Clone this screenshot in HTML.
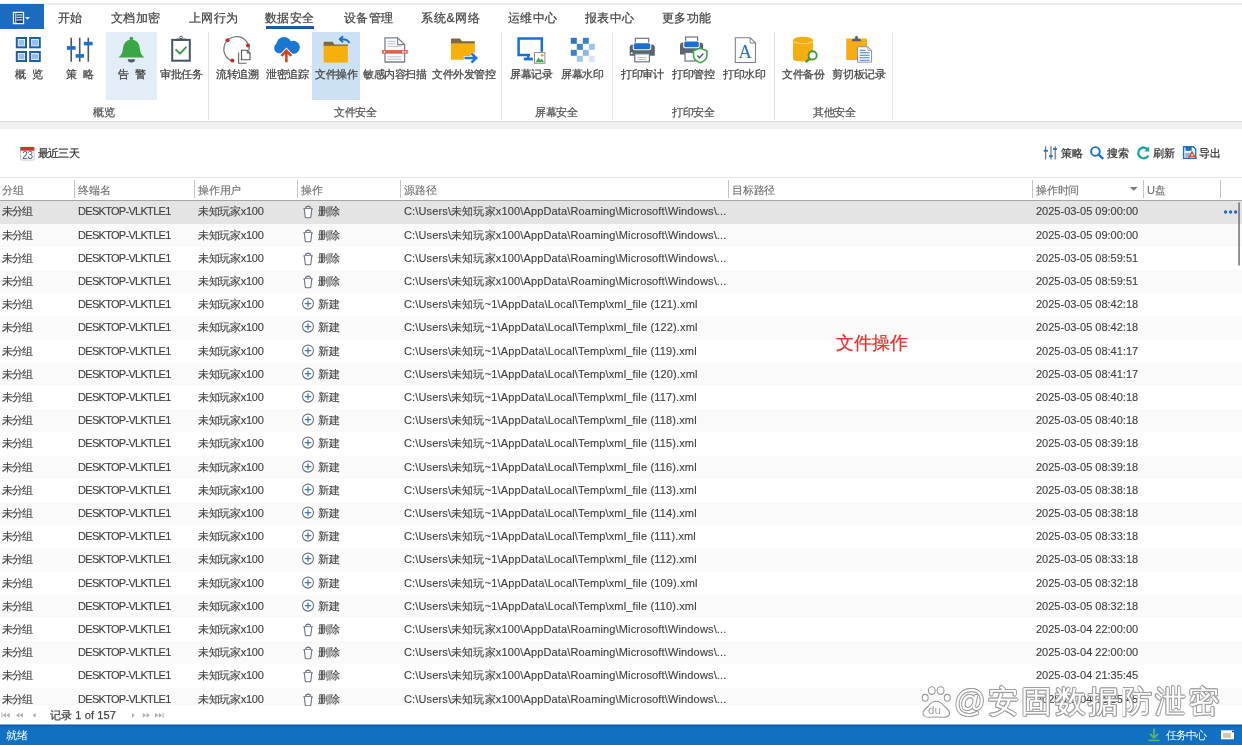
<!DOCTYPE html>
<html><head><meta charset="utf-8">
<style>
*{box-sizing:border-box;margin:0;padding:0}
html,body{width:1242px;height:745px;overflow:hidden;background:#fff;font-family:"Liberation Sans",sans-serif;color:#333}
body{will-change:transform}
.abs{position:absolute}
svg.ov{position:absolute;left:0;top:0;overflow:visible}
#topline{position:absolute;left:0;top:3px;width:1242px;height:2px;background:#ececec}
#appbtn{position:absolute;left:0;top:4px;width:44px;height:25px;background:#1c6bbf}
.tab{position:absolute;top:10px;font-size:12px;color:#444;white-space:nowrap;line-height:16px;letter-spacing:0.4px}
#ul{position:absolute;left:266px;top:26px;width:48px;height:3px;background:#1a5aa5}
.hl{position:absolute;top:32px;height:68px}
.lbl{position:absolute;top:67px;font-size:11px;color:#444;white-space:nowrap;line-height:14px;letter-spacing:-0.4px}
.glbl{position:absolute;top:105px;font-size:11px;color:#555;white-space:nowrap;line-height:14px;letter-spacing:-0.4px}
.sep{position:absolute;top:32px;width:1px;height:88px;background:#e2e2e2}
#band{position:absolute;left:0;top:121px;width:1242px;height:8px;background:#f0f0f0;border-top:1px solid #dadada}
.tb{position:absolute;top:146px;font-size:11px;color:#333;white-space:nowrap;line-height:14px}
#hdr{position:absolute;z-index:2;left:0;top:177px;width:1242px;height:24px;border-top:1px solid #e6e6e6;border-bottom:1px solid #a6a6a6;background:#fff}
.h{position:absolute;top:4.5px;font-size:11px;color:#6e6e6e;white-space:nowrap;line-height:14px;letter-spacing:-0.2px}
.hd{position:absolute;top:2px;width:1px;height:18px;background:#c4c4c4}
.row{position:absolute;left:0;width:1242px;height:23.2px;background:#fff}
.row.alt{background:#fafafa}
.row.sel{background:#e4e4e4}
.c{position:absolute;top:4px;font-size:11px;line-height:15px;color:#404040;white-space:nowrap}
.ic{position:absolute;left:0;top:0}
.dk{letter-spacing:-0.7px}
.grp{letter-spacing:-1px}
.src{letter-spacing:0.15px}
#pager{position:absolute;left:0;top:706px;width:1242px;height:18px;background:#fff}
#status{position:absolute;left:0;top:724px;width:1242px;height:21px;background:linear-gradient(#7fb0e0 0,#7fb0e0 1px,#0a58a8 1px,#0a58a8 2px,#1170c2 2px)}
.wm{position:absolute;line-height:36px;color:#fff;white-space:nowrap;text-shadow:0.9px 0 0 #a0a0a0,-0.9px 0 0 #a0a0a0,0 0.9px 0 #a0a0a0,0 -0.9px 0 #a0a0a0,0.6px 0.6px 0 #a0a0a0,-0.6px 0.6px 0 #a0a0a0,0.6px -0.6px 0 #a0a0a0,-0.6px -0.6px 0 #a0a0a0}
.tab,.lbl,.glbl,.tb,.tx{-webkit-text-stroke:0.25px currentColor}
.h{-webkit-text-stroke:0.1px currentColor}
.c{-webkit-text-stroke:0.12px currentColor}
</style></head><body>
<div id="topline"></div>
<div id="appbtn"></div>
<div class="tab" style="left:58px">开始</div>
<div class="tab" style="left:111px">文档加密</div>
<div class="tab" style="left:189px">上网行为</div>
<div class="tab" style="left:265px">数据安全</div>
<div class="tab" style="left:344px">设备管理</div>
<div class="tab" style="left:421px;letter-spacing:0.7px">系统&amp;网络</div>
<div class="tab" style="left:508px">运维中心</div>
<div class="tab" style="left:585px">报表中心</div>
<div class="tab" style="left:662px">更多功能</div>
<div id="ul"></div>
<div class="hl" style="left:106px;width:51px;background:#e3edf7"></div>
<div class="hl" style="left:312px;width:48px;background:#cce1f4"></div>
<div class="lbl" style="left:15px;letter-spacing:1.5px">概 览</div>
<div class="lbl" style="left:66px;letter-spacing:1.5px">策 略</div>
<div class="lbl" style="left:118px;letter-spacing:1.5px">告 警</div>
<div class="lbl" style="left:160px">审批任务</div>
<div class="lbl" style="left:216px">流转追溯</div>
<div class="lbl" style="left:266px">泄密追踪</div>
<div class="lbl" style="left:315px">文件操作</div>
<div class="lbl" style="left:363px;letter-spacing:-0.5px">敏感内容扫描</div>
<div class="lbl" style="left:432px;letter-spacing:-0.5px">文件外发管控</div>
<div class="lbl" style="left:510px">屏幕记录</div>
<div class="lbl" style="left:561px">屏幕水印</div>
<div class="lbl" style="left:621px">打印审计</div>
<div class="lbl" style="left:672px">打印管控</div>
<div class="lbl" style="left:723px">打印水印</div>
<div class="lbl" style="left:782px">文件备份</div>
<div class="lbl" style="left:832px;letter-spacing:-0.2px">剪切板记录</div>
<div class="sep" style="left:208px"></div>
<div class="sep" style="left:501px"></div>
<div class="sep" style="left:612px"></div>
<div class="sep" style="left:774px"></div>
<div class="sep" style="left:892px"></div>
<div class="glbl" style="left:93px">概览</div>
<div class="glbl" style="left:334px">文件安全</div>
<div class="glbl" style="left:535px">屏幕安全</div>
<div class="glbl" style="left:672px">打印安全</div>
<div class="glbl" style="left:813px">其他安全</div>
<svg class="ov" width="1242" height="130">
<!-- app button icon -->
<rect x="13.5" y="12.4" width="10" height="11.2" fill="#123f80" stroke="#f2f8ff" stroke-width="1.3"/>
<rect x="15.2" y="13.1" width="1.1" height="9.8" fill="#d6e6fa"/>
<g stroke="#c4d6ee" stroke-width="1.3"><path d="M16.6 14.8h5.9M16.6 17.3h5.9M16.6 19.8h5.9"/></g>
<path d="M24.8 17 H30 L27.4 19.8Z" fill="#d6ecff"/>
<!-- overview 4 squares -->
<g stroke="#1d5fa6" stroke-width="2" fill="#fff">
<rect x="16.8" y="38" width="9.2" height="9.3"/><rect x="30.2" y="38" width="9.6" height="9.3"/>
<rect x="16.8" y="52" width="9.2" height="9"/><rect x="30.2" y="52" width="9.6" height="9"/>
</g>
<g fill="#94bff0"><rect x="18.5" y="39.7" width="5.8" height="5.9"/><rect x="31.9" y="39.7" width="6.2" height="5.9"/><rect x="18.5" y="53.7" width="5.8" height="5.6"/><rect x="31.9" y="53.7" width="6.2" height="5.6"/></g>
<!-- strategy -->
<g stroke="#4b5563" stroke-width="1.6"><path d="M71.2 37.8V61.7M79.7 37.8V61.7M88.3 37.8V61.7"/></g>
<g fill="#1a72c9"><rect x="66.9" y="46.1" width="8.7" height="3.7"/><rect x="75.6" y="54.1" width="8.4" height="3.6"/><rect x="83.9" y="41.8" width="8.7" height="3.6"/></g>
<!-- bell -->
<circle cx="131.4" cy="38.6" r="1.9" fill="#3ba646"/>
<path d="M118.3 57.6 Q122.3 55 123 48.5 Q123.8 39.8 131.4 39.5 Q139 39.8 139.8 48.5 Q140.5 55 144.5 57.6 Z" fill="#3ba646"/>
<path d="M127.8 59.2 A3.6 3.2 0 0 0 135 59.2 Z" fill="#555a66"/>
<!-- clipboard -->
<rect x="172.2" y="39.9" width="17.6" height="20.8" fill="#fff" stroke="#4a5563" stroke-width="2"/>
<rect x="176.3" y="38.6" width="9.4" height="2.2" fill="#4a5563"/>
<circle cx="181" cy="37.4" r="1.3" fill="none" stroke="#4a5563" stroke-width="1"/>
<path d="M175.6 49.4 L180 53.7 L186.4 46.9" fill="none" stroke="#3a9a4a" stroke-width="1.9"/>
<!-- flow trace -->
<path d="M249 50.5 A12.6 12.6 0 1 0 234 61.5" fill="none" stroke="#7a7a7a" stroke-width="1.3"/>
<g fill="#c22a2e"><circle cx="227.5" cy="40.3" r="2"/><circle cx="248" cy="45.4" r="2"/><circle cx="232.4" cy="60.6" r="2"/></g>
<path d="M238.6 52.5 V63.2 H246.5" fill="none" stroke="#666" stroke-width="1.1"/>
<path d="M241.5 50.3 H247.2 L250 53.1 V59.8 H241.5 Z" fill="#fff" stroke="#555" stroke-width="1.1"/>
<path d="M247.2 50.3 V53.1 H250" fill="none" stroke="#555" stroke-width="0.9"/>
<!-- cloud -->
<g fill="#1977d3"><circle cx="284" cy="44.6" r="7.6"/><circle cx="293.3" cy="47.3" r="6.5"/><circle cx="279.3" cy="48" r="5.2"/><rect x="279.3" y="46" width="14" height="7.2"/></g>
<path d="M281.5 55.8 L286.4 50.6 L291.3 55.8 M286.4 51 V62.3" fill="none" stroke="#fff" stroke-width="4.4"/>
<path d="M281.5 55.8 L286.4 50.6 L291.3 55.8 M286.4 51 V62.3" fill="none" stroke="#d8401b" stroke-width="2.5"/>
<!-- folder return -->
<path d="M323.6 45.9 V42.4 Q323.6 41.7 324.3 41.7 H332.6 L334.4 44.6 H347.8 V45.9 Z" fill="#7b6a3e"/>
<rect x="323.6" y="45.8" width="24.2" height="16.8" fill="#f7b00b"/>
<path d="M349.4 43 Q347.5 38.8 340.5 39.3" fill="none" stroke="#1b6fc6" stroke-width="1.9"/>
<path d="M343 36.2 L339.8 39.3 L343 42.2" fill="none" stroke="#1b6fc6" stroke-width="1.9"/>
<!-- sensitive scan doc -->
<path d="M385 37.8 H397.6 L404.6 44.6 V62 H385 Z" fill="#fff" stroke="#7b818b" stroke-width="1.3"/>
<path d="M397.6 37.8 V44.6 H404.6" fill="none" stroke="#7b818b" stroke-width="1.1"/>
<g stroke="#b9bec6" stroke-width="1"><path d="M387.5 41.3h8M387.5 43.8h8M387.5 46.3h14M387.5 56.8h14M387.5 59.2h14"/></g>
<rect x="382" y="50.1" width="25.8" height="3.6" fill="#e2604b"/>
<g fill="#fff"><circle cx="384.5" cy="51.9" r="0.9"/><circle cx="403" cy="51.9" r="0.9"/><circle cx="405.6" cy="51.9" r="0.9"/></g>
<!-- folder send -->
<path d="M451 43.8 V39.1 Q451 38.4 451.7 38.4 H460 L462 41.2 H474.8 V43.8 Z" fill="#7b6a3e"/>
<rect x="451" y="43.6" width="23.8" height="16.1" fill="#f7b00b"/>
<path d="M463.8 58 H476 M471.5 53.5 L476.3 58 L471.5 62.5" fill="none" stroke="#fff" stroke-width="4.2"/>
<path d="M464.5 58 H476 M471.5 53.5 L476.3 58 L471.5 62.5" fill="none" stroke="#1e78d8" stroke-width="2.4"/>
<!-- screen record -->
<path d="M530 55 H518.6 V38.5 H541.8 V51.8" fill="none" stroke="#1a6fd0" stroke-width="2.5"/>
<rect x="523.8" y="57.6" width="9" height="2.8" fill="#1a6fd0"/>
<rect x="527" y="55" width="2.4" height="3" fill="#1a6fd0"/>
<rect x="534.5" y="52.5" width="10.4" height="10.8" fill="#fff" stroke="#8a8f98" stroke-width="1"/>
<path d="M535.6 62.3 L538.5 57.5 L540.5 60 L542 58.5 L544 62.3Z" fill="#3faa4a"/>
<circle cx="542.2" cy="55.3" r="1.4" fill="#f39a1e"/>
<!-- screen watermark -->
<rect x="570.8" y="37.8" width="6" height="6" fill="#2b77c6"/><rect x="582.8" y="37.8" width="6" height="6" fill="#3d7fc5"/><rect x="576.8" y="43.8" width="6" height="6" fill="#4282c8"/><rect x="588.8" y="43.8" width="6" height="6" fill="#9dc1e8"/><rect x="570.8" y="49.8" width="6" height="6" fill="#3f81c8"/><rect x="582.8" y="49.8" width="6" height="6" fill="#93b7de"/><rect x="576.8" y="55.8" width="6" height="6" fill="#a0c6ee"/><rect x="588.8" y="55.8" width="6" height="6" fill="#dbe6f0"/>
<!-- printer audit -->
<rect x="635.3" y="38.3" width="13.4" height="6" fill="#fff" stroke="#6b7380" stroke-width="1.2"/>
<path d="M629.7 47.5 Q629.7 44.4 632.8 44.4 H651.7 Q654.8 44.4 654.8 47.5 V55.8 H629.7 Z" fill="#5b6372"/>
<rect x="632.8" y="42.6" width="18.4" height="7.6" rx="2" fill="#fff"/>
<rect x="633.8" y="43.2" width="16.4" height="6" rx="1.5" fill="#1a6fd0"/>
<circle cx="631.8" cy="53.2" r="0.9" fill="#fff"/>
<rect x="634.8" y="53.8" width="14.6" height="8" fill="#fff" stroke="#6b7380" stroke-width="1.2"/>
<path d="M637.5 57.5h9M637.5 59.5h9" stroke="#b7bcc4" stroke-width="0.9"/>
<!-- printer control -->
<rect x="685.6" y="37" width="12" height="5.5" fill="#fff" stroke="#6b7380" stroke-width="1.2"/>
<path d="M680 45.5 Q680 42.6 683 42.6 H700 Q703 42.6 703 45.5 V54.5 H680 Z" fill="#5b6372"/>
<rect x="683.2" y="40.8" width="16.6" height="7.4" rx="2" fill="#fff"/>
<rect x="684.2" y="41.4" width="14.6" height="5.8" rx="1.5" fill="#1a6fd0"/>
<rect x="685" y="52.5" width="10" height="8.5" fill="#fff" stroke="#6b7380" stroke-width="1.2"/>
<path d="M700.2 48.3 L706.9 50.8 V55.5 Q706.9 60.5 700.2 62.8 Q693.5 60.5 693.5 55.5 V50.8 Z" fill="#fff" stroke="#3fa84b" stroke-width="1.6"/>
<path d="M697.2 55.6 L699.5 57.8 L703.4 53.6" fill="none" stroke="#55606e" stroke-width="1.4"/>
<!-- print watermark -->
<path d="M735.3 37.7 H750.2 L755.5 43 V62.5 H735.3 Z" fill="#fff" stroke="#7b818b" stroke-width="1.1"/>
<path d="M750.2 37.7 V43 H755.5" fill="none" stroke="#7b818b" stroke-width="1"/>
<text x="745.3" y="58.4" font-family="Liberation Serif" font-size="18.5" fill="#2a6ec5" text-anchor="middle">A</text>
<!-- file backup -->
<path d="M793 40.2 V58.8 Q793 61.5 803 61.5 Q812.9 61.5 812.9 58.8 V40.2 Z" fill="#f5ad10"/>
<ellipse cx="803" cy="40.2" rx="9.95" ry="3.4" fill="#f5ad10"/>
<path d="M793.2 41.8 Q803 45.6 812.7 41.8" fill="none" stroke="#ffe08a" stroke-width="0.9"/>
<circle cx="812.6" cy="55.4" r="4.1" fill="#fff" stroke="#3c9b3c" stroke-width="1.9"/>
<path d="M809.6 58.5 L805.8 62.3" stroke="#3c9b3c" stroke-width="2.3"/>
<!-- clipboard record -->
<rect x="846.2" y="38.5" width="20.8" height="21.5" rx="1" fill="#f5ad10"/>
<path d="M851.8 41.3 L852.8 38.8 H860.2 L861.2 41.3 Z" fill="#55606e"/>
<circle cx="856.5" cy="37.6" r="1.6" fill="#55606e"/>
<path d="M857.5 46.8 H868 L871.6 50.4 V62.2 H857.5 Z" fill="#fff" stroke="#8a90a0" stroke-width="1"/>
<path d="M868 46.8 V50.4 H871.6" fill="none" stroke="#8a90a0" stroke-width="0.9"/>
<g stroke="#3a7bd5" stroke-width="1.1"><path d="M859.6 50.3h6M859.6 52.8h10M859.6 55.3h10M859.6 57.8h10M859.6 60.2h10"/></g>
</svg>

<div id="band"></div>
<div class="tb" style="left:38px;letter-spacing:-0.8px">最近三天</div>
<div class="tb" style="left:1061px">策略</div>
<div class="tb" style="left:1107px">搜索</div>
<div class="tb" style="left:1153px">刷新</div>
<div class="tb" style="left:1199px">导出</div>
<svg class="ov" width="1242" height="170">
<!-- calendar -->
<rect x="20.6" y="147.2" width="13.5" height="12.8" rx="1" fill="#fff" stroke="#c0c4cc" stroke-width="0.9"/>
<rect x="20.4" y="147" width="13.9" height="3.7" fill="#c9352c"/>
<text x="27.4" y="159" font-family="Liberation Sans" font-size="10" fill="#4a5c78" text-anchor="middle" letter-spacing="-0.3">23</text>
<!-- strategy small -->
<g stroke="#6b7280" stroke-width="1.2"><path d="M1045.6 146.2V159.5M1051 146.2V159.5M1055.2 146.2V159.5"/></g>
<g fill="#1b72c8"><rect x="1043.7" y="149.8" width="4.2" height="1.9"/><rect x="1049" y="155.2" width="3.7" height="1.9"/><rect x="1053.2" y="148.1" width="3.7" height="1.9"/></g>
<!-- search -->
<circle cx="1095.4" cy="151.4" r="4.3" fill="none" stroke="#1c6ec6" stroke-width="1.9"/>
<path d="M1098.6 154.6 L1103.2 158.9" stroke="#1c6ec6" stroke-width="2.3"/>
<!-- refresh -->
<path d="M1148.2 150 A5.4 5.4 0 1 0 1148.4 155.5" fill="none" stroke="#18a2a8" stroke-width="2.3"/>
<path d="M1149.2 146.6 V151.5 H1144.3 Z" fill="#18a2a8"/>
<!-- export -->
<path d="M1183.6 146.8 H1193.3 L1195.6 149.1 V158.4 H1183.6 Z" fill="#fff" stroke="#1a6fc8" stroke-width="1.4"/>
<rect x="1185.5" y="146.8" width="6.2" height="4" fill="#1a6fc8"/>
<rect x="1185.2" y="152.8" width="6" height="4.8" fill="#8fb7e6"/>
<path d="M1192 151.5 Q1190.5 156 1187.8 159 M1192 151.5 Q1193.5 156 1196.8 158.5 M1188 157.2 Q1192 155.5 1196.5 157.2" fill="none" stroke="#d9502e" stroke-width="1.3"/>
</svg>

<div id="hdr">
<div class="h" style="left:2px">分组</div>
<div class="hd" style="left:74px"></div>
<div class="h" style="left:78px">终端名</div>
<div class="hd" style="left:194px"></div>
<div class="h" style="left:198px">操作用户</div>
<div class="hd" style="left:297px"></div>
<div class="h" style="left:301px">操作</div>
<div class="hd" style="left:400px"></div>
<div class="h" style="left:404px">源路径</div>
<div class="hd" style="left:728px"></div>
<div class="h" style="left:732px">目标路径</div>
<div class="hd" style="left:1032px"></div>
<div class="h" style="left:1036px">操作时间</div>
<svg class="ov" width="1242" height="24" style="top:-1px"><path d="M1129.8 10 H1137.7 L1133.75 13.7 Z" fill="#7a7a7a"/></svg>
<div class="hd" style="left:1143px"></div>
<div class="h" style="left:1147px">U盘</div>
<div class="hd" style="left:1220px"></div>
</div>
<div class="row sel" style="top:200.4px"><span class="c grp" style="left:2px">未分组</span><span class="c dk" style="left:78px">DESKTOP-VLKTLE1</span><span class="c" style="left:198px;letter-spacing:-0.3px">未知玩家x100</span><svg class="ic" width="20" height="23" style="left:298px"><path d="M7.6 8.3 Q7.8 6.2 10.4 6.1 Q12.6 6.2 12.8 8.3" fill="none" stroke="#6a7180" stroke-width="1.1"/><path d="M5.4 8.8 H14.7" stroke="#6a7180" stroke-width="1.2"/><path d="M6.3 9 L7.3 17.2 Q7.4 17.8 8 17.8 H12.1 Q12.7 17.8 12.8 17.2 L13.8 9" fill="#fff" stroke="#6a7180" stroke-width="1.1"/></svg><span class="c" style="left:318px">删除</span><span class="c src" style="left:404px">C:\Users\未知玩家x100\AppData\Roaming\Microsoft\Windows\...</span><span class="c" style="left:1036px">2025-03-05 09:00:00</span></div>
<div class="row alt" style="top:223.6px"><span class="c grp" style="left:2px">未分组</span><span class="c dk" style="left:78px">DESKTOP-VLKTLE1</span><span class="c" style="left:198px;letter-spacing:-0.3px">未知玩家x100</span><svg class="ic" width="20" height="23" style="left:298px"><path d="M7.6 8.3 Q7.8 6.2 10.4 6.1 Q12.6 6.2 12.8 8.3" fill="none" stroke="#6a7180" stroke-width="1.1"/><path d="M5.4 8.8 H14.7" stroke="#6a7180" stroke-width="1.2"/><path d="M6.3 9 L7.3 17.2 Q7.4 17.8 8 17.8 H12.1 Q12.7 17.8 12.8 17.2 L13.8 9" fill="#fff" stroke="#6a7180" stroke-width="1.1"/></svg><span class="c" style="left:318px">删除</span><span class="c src" style="left:404px">C:\Users\未知玩家x100\AppData\Roaming\Microsoft\Windows\...</span><span class="c" style="left:1036px">2025-03-05 09:00:00</span></div>
<div class="row" style="top:246.8px"><span class="c grp" style="left:2px">未分组</span><span class="c dk" style="left:78px">DESKTOP-VLKTLE1</span><span class="c" style="left:198px;letter-spacing:-0.3px">未知玩家x100</span><svg class="ic" width="20" height="23" style="left:298px"><path d="M7.6 8.3 Q7.8 6.2 10.4 6.1 Q12.6 6.2 12.8 8.3" fill="none" stroke="#6a7180" stroke-width="1.1"/><path d="M5.4 8.8 H14.7" stroke="#6a7180" stroke-width="1.2"/><path d="M6.3 9 L7.3 17.2 Q7.4 17.8 8 17.8 H12.1 Q12.7 17.8 12.8 17.2 L13.8 9" fill="#fff" stroke="#6a7180" stroke-width="1.1"/></svg><span class="c" style="left:318px">删除</span><span class="c src" style="left:404px">C:\Users\未知玩家x100\AppData\Roaming\Microsoft\Windows\...</span><span class="c" style="left:1036px">2025-03-05 08:59:51</span></div>
<div class="row alt" style="top:270.0px"><span class="c grp" style="left:2px">未分组</span><span class="c dk" style="left:78px">DESKTOP-VLKTLE1</span><span class="c" style="left:198px;letter-spacing:-0.3px">未知玩家x100</span><svg class="ic" width="20" height="23" style="left:298px"><path d="M7.6 8.3 Q7.8 6.2 10.4 6.1 Q12.6 6.2 12.8 8.3" fill="none" stroke="#6a7180" stroke-width="1.1"/><path d="M5.4 8.8 H14.7" stroke="#6a7180" stroke-width="1.2"/><path d="M6.3 9 L7.3 17.2 Q7.4 17.8 8 17.8 H12.1 Q12.7 17.8 12.8 17.2 L13.8 9" fill="#fff" stroke="#6a7180" stroke-width="1.1"/></svg><span class="c" style="left:318px">删除</span><span class="c src" style="left:404px">C:\Users\未知玩家x100\AppData\Roaming\Microsoft\Windows\...</span><span class="c" style="left:1036px">2025-03-05 08:59:51</span></div>
<div class="row" style="top:293.2px"><span class="c grp" style="left:2px">未分组</span><span class="c dk" style="left:78px">DESKTOP-VLKTLE1</span><span class="c" style="left:198px;letter-spacing:-0.3px">未知玩家x100</span><svg class="ic" width="20" height="23" style="left:298px"><circle cx="10" cy="10.6" r="5.5" fill="#fff" stroke="#6a7180" stroke-width="1.1"/><path d="M10 7.4 V13.8 M6.8 10.6 H13.2" stroke="#3c78b5" stroke-width="1.3"/></svg><span class="c" style="left:318px">新建</span><span class="c src" style="left:404px">C:\Users\未知玩~1\AppData\Local\Temp\xml_file (121).xml</span><span class="c" style="left:1036px">2025-03-05 08:42:18</span></div>
<div class="row alt" style="top:316.4px"><span class="c grp" style="left:2px">未分组</span><span class="c dk" style="left:78px">DESKTOP-VLKTLE1</span><span class="c" style="left:198px;letter-spacing:-0.3px">未知玩家x100</span><svg class="ic" width="20" height="23" style="left:298px"><circle cx="10" cy="10.6" r="5.5" fill="#fff" stroke="#6a7180" stroke-width="1.1"/><path d="M10 7.4 V13.8 M6.8 10.6 H13.2" stroke="#3c78b5" stroke-width="1.3"/></svg><span class="c" style="left:318px">新建</span><span class="c src" style="left:404px">C:\Users\未知玩~1\AppData\Local\Temp\xml_file (122).xml</span><span class="c" style="left:1036px">2025-03-05 08:42:18</span></div>
<div class="row" style="top:339.6px"><span class="c grp" style="left:2px">未分组</span><span class="c dk" style="left:78px">DESKTOP-VLKTLE1</span><span class="c" style="left:198px;letter-spacing:-0.3px">未知玩家x100</span><svg class="ic" width="20" height="23" style="left:298px"><circle cx="10" cy="10.6" r="5.5" fill="#fff" stroke="#6a7180" stroke-width="1.1"/><path d="M10 7.4 V13.8 M6.8 10.6 H13.2" stroke="#3c78b5" stroke-width="1.3"/></svg><span class="c" style="left:318px">新建</span><span class="c src" style="left:404px">C:\Users\未知玩~1\AppData\Local\Temp\xml_file (119).xml</span><span class="c" style="left:1036px">2025-03-05 08:41:17</span></div>
<div class="row alt" style="top:362.8px"><span class="c grp" style="left:2px">未分组</span><span class="c dk" style="left:78px">DESKTOP-VLKTLE1</span><span class="c" style="left:198px;letter-spacing:-0.3px">未知玩家x100</span><svg class="ic" width="20" height="23" style="left:298px"><circle cx="10" cy="10.6" r="5.5" fill="#fff" stroke="#6a7180" stroke-width="1.1"/><path d="M10 7.4 V13.8 M6.8 10.6 H13.2" stroke="#3c78b5" stroke-width="1.3"/></svg><span class="c" style="left:318px">新建</span><span class="c src" style="left:404px">C:\Users\未知玩~1\AppData\Local\Temp\xml_file (120).xml</span><span class="c" style="left:1036px">2025-03-05 08:41:17</span></div>
<div class="row" style="top:386.0px"><span class="c grp" style="left:2px">未分组</span><span class="c dk" style="left:78px">DESKTOP-VLKTLE1</span><span class="c" style="left:198px;letter-spacing:-0.3px">未知玩家x100</span><svg class="ic" width="20" height="23" style="left:298px"><circle cx="10" cy="10.6" r="5.5" fill="#fff" stroke="#6a7180" stroke-width="1.1"/><path d="M10 7.4 V13.8 M6.8 10.6 H13.2" stroke="#3c78b5" stroke-width="1.3"/></svg><span class="c" style="left:318px">新建</span><span class="c src" style="left:404px">C:\Users\未知玩~1\AppData\Local\Temp\xml_file (117).xml</span><span class="c" style="left:1036px">2025-03-05 08:40:18</span></div>
<div class="row alt" style="top:409.2px"><span class="c grp" style="left:2px">未分组</span><span class="c dk" style="left:78px">DESKTOP-VLKTLE1</span><span class="c" style="left:198px;letter-spacing:-0.3px">未知玩家x100</span><svg class="ic" width="20" height="23" style="left:298px"><circle cx="10" cy="10.6" r="5.5" fill="#fff" stroke="#6a7180" stroke-width="1.1"/><path d="M10 7.4 V13.8 M6.8 10.6 H13.2" stroke="#3c78b5" stroke-width="1.3"/></svg><span class="c" style="left:318px">新建</span><span class="c src" style="left:404px">C:\Users\未知玩~1\AppData\Local\Temp\xml_file (118).xml</span><span class="c" style="left:1036px">2025-03-05 08:40:18</span></div>
<div class="row" style="top:432.4px"><span class="c grp" style="left:2px">未分组</span><span class="c dk" style="left:78px">DESKTOP-VLKTLE1</span><span class="c" style="left:198px;letter-spacing:-0.3px">未知玩家x100</span><svg class="ic" width="20" height="23" style="left:298px"><circle cx="10" cy="10.6" r="5.5" fill="#fff" stroke="#6a7180" stroke-width="1.1"/><path d="M10 7.4 V13.8 M6.8 10.6 H13.2" stroke="#3c78b5" stroke-width="1.3"/></svg><span class="c" style="left:318px">新建</span><span class="c src" style="left:404px">C:\Users\未知玩~1\AppData\Local\Temp\xml_file (115).xml</span><span class="c" style="left:1036px">2025-03-05 08:39:18</span></div>
<div class="row alt" style="top:455.6px"><span class="c grp" style="left:2px">未分组</span><span class="c dk" style="left:78px">DESKTOP-VLKTLE1</span><span class="c" style="left:198px;letter-spacing:-0.3px">未知玩家x100</span><svg class="ic" width="20" height="23" style="left:298px"><circle cx="10" cy="10.6" r="5.5" fill="#fff" stroke="#6a7180" stroke-width="1.1"/><path d="M10 7.4 V13.8 M6.8 10.6 H13.2" stroke="#3c78b5" stroke-width="1.3"/></svg><span class="c" style="left:318px">新建</span><span class="c src" style="left:404px">C:\Users\未知玩~1\AppData\Local\Temp\xml_file (116).xml</span><span class="c" style="left:1036px">2025-03-05 08:39:18</span></div>
<div class="row" style="top:478.8px"><span class="c grp" style="left:2px">未分组</span><span class="c dk" style="left:78px">DESKTOP-VLKTLE1</span><span class="c" style="left:198px;letter-spacing:-0.3px">未知玩家x100</span><svg class="ic" width="20" height="23" style="left:298px"><circle cx="10" cy="10.6" r="5.5" fill="#fff" stroke="#6a7180" stroke-width="1.1"/><path d="M10 7.4 V13.8 M6.8 10.6 H13.2" stroke="#3c78b5" stroke-width="1.3"/></svg><span class="c" style="left:318px">新建</span><span class="c src" style="left:404px">C:\Users\未知玩~1\AppData\Local\Temp\xml_file (113).xml</span><span class="c" style="left:1036px">2025-03-05 08:38:18</span></div>
<div class="row alt" style="top:502.0px"><span class="c grp" style="left:2px">未分组</span><span class="c dk" style="left:78px">DESKTOP-VLKTLE1</span><span class="c" style="left:198px;letter-spacing:-0.3px">未知玩家x100</span><svg class="ic" width="20" height="23" style="left:298px"><circle cx="10" cy="10.6" r="5.5" fill="#fff" stroke="#6a7180" stroke-width="1.1"/><path d="M10 7.4 V13.8 M6.8 10.6 H13.2" stroke="#3c78b5" stroke-width="1.3"/></svg><span class="c" style="left:318px">新建</span><span class="c src" style="left:404px">C:\Users\未知玩~1\AppData\Local\Temp\xml_file (114).xml</span><span class="c" style="left:1036px">2025-03-05 08:38:18</span></div>
<div class="row" style="top:525.2px"><span class="c grp" style="left:2px">未分组</span><span class="c dk" style="left:78px">DESKTOP-VLKTLE1</span><span class="c" style="left:198px;letter-spacing:-0.3px">未知玩家x100</span><svg class="ic" width="20" height="23" style="left:298px"><circle cx="10" cy="10.6" r="5.5" fill="#fff" stroke="#6a7180" stroke-width="1.1"/><path d="M10 7.4 V13.8 M6.8 10.6 H13.2" stroke="#3c78b5" stroke-width="1.3"/></svg><span class="c" style="left:318px">新建</span><span class="c src" style="left:404px">C:\Users\未知玩~1\AppData\Local\Temp\xml_file (111).xml</span><span class="c" style="left:1036px">2025-03-05 08:33:18</span></div>
<div class="row alt" style="top:548.4px"><span class="c grp" style="left:2px">未分组</span><span class="c dk" style="left:78px">DESKTOP-VLKTLE1</span><span class="c" style="left:198px;letter-spacing:-0.3px">未知玩家x100</span><svg class="ic" width="20" height="23" style="left:298px"><circle cx="10" cy="10.6" r="5.5" fill="#fff" stroke="#6a7180" stroke-width="1.1"/><path d="M10 7.4 V13.8 M6.8 10.6 H13.2" stroke="#3c78b5" stroke-width="1.3"/></svg><span class="c" style="left:318px">新建</span><span class="c src" style="left:404px">C:\Users\未知玩~1\AppData\Local\Temp\xml_file (112).xml</span><span class="c" style="left:1036px">2025-03-05 08:33:18</span></div>
<div class="row" style="top:571.6px"><span class="c grp" style="left:2px">未分组</span><span class="c dk" style="left:78px">DESKTOP-VLKTLE1</span><span class="c" style="left:198px;letter-spacing:-0.3px">未知玩家x100</span><svg class="ic" width="20" height="23" style="left:298px"><circle cx="10" cy="10.6" r="5.5" fill="#fff" stroke="#6a7180" stroke-width="1.1"/><path d="M10 7.4 V13.8 M6.8 10.6 H13.2" stroke="#3c78b5" stroke-width="1.3"/></svg><span class="c" style="left:318px">新建</span><span class="c src" style="left:404px">C:\Users\未知玩~1\AppData\Local\Temp\xml_file (109).xml</span><span class="c" style="left:1036px">2025-03-05 08:32:18</span></div>
<div class="row alt" style="top:594.8px"><span class="c grp" style="left:2px">未分组</span><span class="c dk" style="left:78px">DESKTOP-VLKTLE1</span><span class="c" style="left:198px;letter-spacing:-0.3px">未知玩家x100</span><svg class="ic" width="20" height="23" style="left:298px"><circle cx="10" cy="10.6" r="5.5" fill="#fff" stroke="#6a7180" stroke-width="1.1"/><path d="M10 7.4 V13.8 M6.8 10.6 H13.2" stroke="#3c78b5" stroke-width="1.3"/></svg><span class="c" style="left:318px">新建</span><span class="c src" style="left:404px">C:\Users\未知玩~1\AppData\Local\Temp\xml_file (110).xml</span><span class="c" style="left:1036px">2025-03-05 08:32:18</span></div>
<div class="row" style="top:618.0px"><span class="c grp" style="left:2px">未分组</span><span class="c dk" style="left:78px">DESKTOP-VLKTLE1</span><span class="c" style="left:198px;letter-spacing:-0.3px">未知玩家x100</span><svg class="ic" width="20" height="23" style="left:298px"><path d="M7.6 8.3 Q7.8 6.2 10.4 6.1 Q12.6 6.2 12.8 8.3" fill="none" stroke="#6a7180" stroke-width="1.1"/><path d="M5.4 8.8 H14.7" stroke="#6a7180" stroke-width="1.2"/><path d="M6.3 9 L7.3 17.2 Q7.4 17.8 8 17.8 H12.1 Q12.7 17.8 12.8 17.2 L13.8 9" fill="#fff" stroke="#6a7180" stroke-width="1.1"/></svg><span class="c" style="left:318px">删除</span><span class="c src" style="left:404px">C:\Users\未知玩家x100\AppData\Roaming\Microsoft\Windows\...</span><span class="c" style="left:1036px">2025-03-04 22:00:00</span></div>
<div class="row alt" style="top:641.2px"><span class="c grp" style="left:2px">未分组</span><span class="c dk" style="left:78px">DESKTOP-VLKTLE1</span><span class="c" style="left:198px;letter-spacing:-0.3px">未知玩家x100</span><svg class="ic" width="20" height="23" style="left:298px"><path d="M7.6 8.3 Q7.8 6.2 10.4 6.1 Q12.6 6.2 12.8 8.3" fill="none" stroke="#6a7180" stroke-width="1.1"/><path d="M5.4 8.8 H14.7" stroke="#6a7180" stroke-width="1.2"/><path d="M6.3 9 L7.3 17.2 Q7.4 17.8 8 17.8 H12.1 Q12.7 17.8 12.8 17.2 L13.8 9" fill="#fff" stroke="#6a7180" stroke-width="1.1"/></svg><span class="c" style="left:318px">删除</span><span class="c src" style="left:404px">C:\Users\未知玩家x100\AppData\Roaming\Microsoft\Windows\...</span><span class="c" style="left:1036px">2025-03-04 22:00:00</span></div>
<div class="row" style="top:664.4px"><span class="c grp" style="left:2px">未分组</span><span class="c dk" style="left:78px">DESKTOP-VLKTLE1</span><span class="c" style="left:198px;letter-spacing:-0.3px">未知玩家x100</span><svg class="ic" width="20" height="23" style="left:298px"><path d="M7.6 8.3 Q7.8 6.2 10.4 6.1 Q12.6 6.2 12.8 8.3" fill="none" stroke="#6a7180" stroke-width="1.1"/><path d="M5.4 8.8 H14.7" stroke="#6a7180" stroke-width="1.2"/><path d="M6.3 9 L7.3 17.2 Q7.4 17.8 8 17.8 H12.1 Q12.7 17.8 12.8 17.2 L13.8 9" fill="#fff" stroke="#6a7180" stroke-width="1.1"/></svg><span class="c" style="left:318px">删除</span><span class="c src" style="left:404px">C:\Users\未知玩家x100\AppData\Roaming\Microsoft\Windows\...</span><span class="c" style="left:1036px">2025-03-04 21:35:45</span></div>
<div class="row alt" style="top:687.6px"><span class="c grp" style="left:2px">未分组</span><span class="c dk" style="left:78px">DESKTOP-VLKTLE1</span><span class="c" style="left:198px;letter-spacing:-0.3px">未知玩家x100</span><svg class="ic" width="20" height="23" style="left:298px"><path d="M7.6 8.3 Q7.8 6.2 10.4 6.1 Q12.6 6.2 12.8 8.3" fill="none" stroke="#6a7180" stroke-width="1.1"/><path d="M5.4 8.8 H14.7" stroke="#6a7180" stroke-width="1.2"/><path d="M6.3 9 L7.3 17.2 Q7.4 17.8 8 17.8 H12.1 Q12.7 17.8 12.8 17.2 L13.8 9" fill="#fff" stroke="#6a7180" stroke-width="1.1"/></svg><span class="c" style="left:318px">删除</span><span class="c src" style="left:404px">C:\Users\未知玩家x100\AppData\Roaming\Microsoft\Windows\...</span><span class="c" style="left:1036px">2025-03-04 21:35:45</span></div>
<svg class="ov" width="1242" height="745">
<circle cx="1225.6" cy="212" r="1.7" fill="#1f6cbd"/><circle cx="1230.6" cy="212" r="1.7" fill="#1f6cbd"/><circle cx="1235.6" cy="212" r="1.7" fill="#1f6cbd"/>
<rect x="1238.3" y="202.5" width="1.5" height="63" fill="#707070"/>
</svg>
<div class="abs tx" style="left:836px;top:331px;font-size:18px;color:#e3312b;line-height:24px">文件操作</div>
<div id="pager"></div>
<svg class="ov" width="1242" height="745">
<g fill="#b0b0b0">
<rect x="1.4" y="712.7" width="1" height="5"/><path d="M2.6 715.2 L6 712.7 V717.7Z M6.2 715.2 L9.6 712.7 V717.7Z"/>
<path d="M16 715.2 L19.4 712.7 V717.7Z M19.6 715.2 L23 712.7 V717.7Z"/>
<path d="M32.6 715.2 L35.6 712.7 V717.7Z"/>
<path d="M134.8 715.2 L132 712.7 V717.7Z"/>
<path d="M146.2 715.2 L142.8 712.7 V717.7Z M150 715.2 L146.6 712.7 V717.7Z"/>
<path d="M158.4 715.2 L155 712.7 V717.7Z M162.2 715.2 L158.8 712.7 V717.7Z"/><rect x="162.6" y="712.7" width="1" height="5"/>
</g>
</svg>
<div class="abs tx" style="left:50px;top:708px;font-size:11px;color:#444;line-height:15px;letter-spacing:0.1px">记录 1 of 157</div>
<div id="status"></div>
<div class="abs" style="left:6px;top:727.5px;font-size:11px;color:#fff;line-height:15px">就绪</div>
<div class="abs" style="left:1166px;top:727.5px;font-size:11px;color:#fff;line-height:15px;letter-spacing:-1.1px">任务中心</div>
<svg class="ov" width="1242" height="745">
<path d="M1154 728.5 V737.5 M1150 733.8 L1154 737.8 L1158 733.8" fill="none" stroke="#5cb85c" stroke-width="1.8"/>
<rect x="1148.5" y="739.6" width="11" height="1.6" fill="#5cb85c"/>
<rect x="1221" y="730.3" width="13" height="9" fill="#fff"/>
<rect x="1223" y="733" width="8" height="5" fill="#d8c8b0"/>
<circle cx="1233" cy="731.5" r="1" fill="#333"/>
</svg>
<svg class="ov" width="1242" height="745">
<g fill="#fff" stroke="#999" stroke-width="1.1">
<ellipse cx="925.2" cy="697.8" rx="3" ry="3.4"/><ellipse cx="931.8" cy="690.6" rx="3.4" ry="3.8"/><ellipse cx="940.6" cy="690.6" rx="3.4" ry="3.8"/><ellipse cx="947.3" cy="697.8" rx="3" ry="3.4"/>
<path d="M936.2 701.2 Q940.5 701.2 944.5 706.5 Q950 710.5 949.5 714 Q948.5 717.6 942 717.3 Q936.2 716.8 930.5 717.3 Q923.8 717.6 923 714 Q922.5 710.5 928 706.5 Q932 701.2 936.2 701.2 Z"/>
</g>
<text x="928" y="714.2" font-family="Liberation Sans" font-size="11.5" fill="#a0a0a0">du</text>
</svg>
<div class="wm" style="left:954px;top:683.5px;font-size:31px;letter-spacing:2.4px">@安固数据防泄密</div>

</body></html>
